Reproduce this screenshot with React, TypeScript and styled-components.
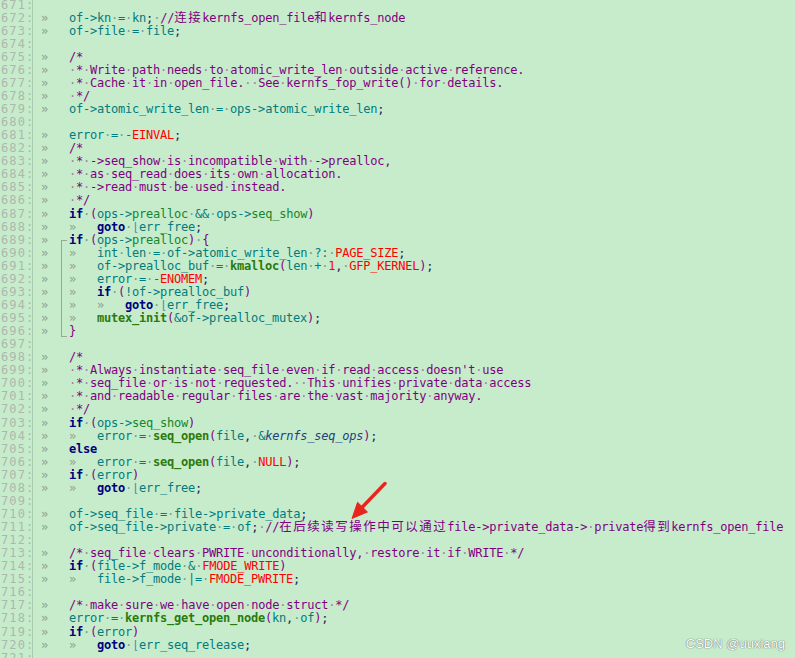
import React from "react";
import styled, { createGlobalStyle, css } from "styled-components";

const GlobalStyle = createGlobalStyle`
  html, body {
    margin: 0;
    padding: 0;
    background: #c7eccc;
    overflow: hidden;
  }
  body {
    width: 795px;
    height: 658px;
    position: relative;
  }
`;

const LINE_H = 13.07;

const Editor = styled.div`
  margin-top: -1.5px;
  display: flex;
  flex-direction: column;
  font-family: "DejaVu Sans Mono", "Liberation Mono", monospace;
  font-size: 12px;
  letter-spacing: -0.224px;
`;

const Row = styled.div`
  display: flex;
  height: ${LINE_H}px;
  line-height: ${LINE_H}px;
`;

const Gutter = styled.div`
  flex: 0 0 33px;
  box-sizing: border-box;
  padding-left: 1px;
  border-right: 1px solid #a9caac;
  color: #adb7ae;
  font-size: 12px;
  letter-spacing: 1.1px;
  white-space: pre;
  overflow: hidden;
`;

const Code = styled.div`
  flex: 1;
  padding-left: 8px;
  white-space: pre;
  overflow: visible;
`;

type Fold = "start" | "mid" | "end" | undefined;

const foldCss = {
  start: css`
    top: 6px;
    bottom: 0;
    border-top: 1px solid #97a898;
  `,
  mid: css`
    top: 0;
    bottom: 0;
  `,
  end: css`
    top: 0;
    height: 11px;
    border-bottom: 1px solid #97a898;
  `,
};

const Tab = styled.span<{ $fold?: Fold }>`
  display: inline-block;
  position: relative;
  width: 28px;
  color: #8d9f8f;
  vertical-align: top;
  ${(p) =>
    p.$fold &&
    css`
      &::after {
        content: "";
        position: absolute;
        left: 20px;
        width: 5px;
        border-left: 1px solid #97a898;
        ${foldCss[p.$fold]}
      }
    `}
`;

type Kind =
  | "var"
  | "field"
  | "fn"
  | "fnptr"
  | "kw"
  | "macro"
  | "num"
  | "paren"
  | "punct"
  | "op"
  | "mark"
  | "glob"
  | "comment";

const kindCss: Record<Kind, ReturnType<typeof css>> = {
  var: css`color: #007b7e;`,
  field: css`color: #007b7e;`,
  op: css`color: #007b7e;`,
  fn: css`color: #2a7a0c; font-weight: bold;`,
  fnptr: css`color: #15862a;`,
  kw: css`color: #000080; font-weight: bold;`,
  macro: css`color: #ff0000;`,
  num: css`color: #ff0000;`,
  paren: css`color: #800080;`,
  punct: css`color: #1c1c66;`,
  mark: css`color: #4f8fae;`,
  glob: css`color: #22407c; font-style: italic;`,
  comment: css`color: #800080;`,
};

const Tok = styled.span<{ $kind: Kind }>`
  ${(p) => kindCss[p.$kind]}
`;

const Ws = styled.span<{ $comment?: boolean }>`
  color: ${(p) => (p.$comment ? "#a77aa9" : "#6f9e95")};
`;

const Cjk = styled.span`
  font-family: "Noto Sans CJK SC", "Noto Sans", sans-serif;
  font-size: 12.5px;
  letter-spacing: 1.5px;
  line-height: 0;
  color: #800080;
`;

const Watermark = styled.div`
  position: absolute;
  right: 10px;
  bottom: 7px;
  font-family: "Liberation Sans", Arial, sans-serif;
  font-size: 13px;
  line-height: 15px;
  color: #ffffff;
  text-shadow: 0 0 1px #6a6a6a, 0 0 1px #6a6a6a;
  white-space: pre;
`;

const ArrowSvg = styled.svg`
  position: absolute;
  left: 345px;
  top: 478px;
  overflow: visible;
`;

const FIRST = 671;

const LINES: string[] = [
  "",
  "\tof->kn = kn; //连接kernfs_open_file和kernfs_node",
  "\tof->file = file;",
  "",
  "\t/*",
  "\t * Write path needs to atomic_write_len outside active reference.",
  "\t * Cache it in open_file.  See kernfs_fop_write() for details.",
  "\t */",
  "\tof->atomic_write_len = ops->atomic_write_len;",
  "",
  "\terror = -EINVAL;",
  "\t/*",
  "\t * ->seq_show is incompatible with ->prealloc,",
  "\t * as seq_read does its own allocation.",
  "\t * ->read must be used instead.",
  "\t */",
  "\tif (ops->prealloc && ops->seq_show)",
  "\t\tgoto ⌊err_free;",
  "\tif (ops->prealloc) {",
  "\t\tint len = of->atomic_write_len ?: PAGE_SIZE;",
  "\t\tof->prealloc_buf = kmalloc(len + 1, GFP_KERNEL);",
  "\t\terror = -ENOMEM;",
  "\t\tif (!of->prealloc_buf)",
  "\t\t\tgoto ⌊err_free;",
  "\t\tmutex_init(&of->prealloc_mutex);",
  "\t}",
  "",
  "\t/*",
  "\t * Always instantiate seq_file even if read access doesn't use",
  "\t * seq_file or is not requested.  This unifies private data access",
  "\t * and readable regular files are the vast majority anyway.",
  "\t */",
  "\tif (ops->seq_show)",
  "\t\terror = seq_open(file, &kernfs_seq_ops);",
  "\telse",
  "\t\terror = seq_open(file, NULL);",
  "\tif (error)",
  "\t\tgoto ⌊err_free;",
  "",
  "\tof->seq_file = file->private_data;",
  "\tof->seq_file->private = of; //在后续读写操作中可以通过file->private_data-> private得到kernfs_open_file",
  "",
  "\t/* seq_file clears PWRITE unconditionally, restore it if WRITE */",
  "\tif (file->f_mode & FMODE_WRITE)",
  "\t\tfile->f_mode |= FMODE_PWRITE;",
  "",
  "\t/* make sure we have open node struct */",
  "\terror = kernfs_get_open_node(kn, of);",
  "\tif (error)",
  "\t\tgoto ⌊err_seq_release;",
  "",
  "",
];

const FOLDS: Record<number, Fold> = {
  689: "start",
  690: "mid",
  691: "mid",
  692: "mid",
  693: "mid",
  694: "mid",
  695: "mid",
  696: "end",
};

const KEYWORDS = new Set(["if", "else", "goto", "return"]);

type T = { t: string; k: Kind | "ws" };

function tokenizeCode(src: string): T[] {
  const re = /( +)|([A-Za-z_]\w*)|(\d+)|(->)|(&&|\|=|\?:|[=+\-!&|])|([(){}])|([;,])|(⌊)|(.)/g;
  const raw: T[] = [];
  let m: RegExpExecArray | null;
  while ((m = re.exec(src))) {
    if (m[1]) raw.push({ t: m[1], k: "ws" });
    else if (m[2]) raw.push({ t: m[2], k: "var" });
    else if (m[3]) raw.push({ t: m[3], k: "num" });
    else if (m[4]) raw.push({ t: m[4], k: "op" });
    else if (m[5]) raw.push({ t: m[5], k: "op" });
    else if (m[6]) raw.push({ t: m[6], k: "paren" });
    else if (m[7]) raw.push({ t: m[7], k: "punct" });
    else if (m[8]) raw.push({ t: m[8], k: "mark" });
    else raw.push({ t: m[0], k: "punct" });
  }
  const sig = raw.map((x, i) => i).filter((i) => raw[i].k !== "ws");
  sig.forEach((idx, j) => {
    const tok = raw[idx];
    if (tok.k !== "var") return;
    const name = tok.t;
    const prev = j > 0 ? raw[sig[j - 1]] : undefined;
    const prev2 = j > 1 ? raw[sig[j - 2]] : undefined;
    const next = j < sig.length - 1 ? raw[sig[j + 1]] : undefined;
    if (KEYWORDS.has(name)) tok.k = "kw";
    else if (/^[A-Z][A-Z0-9_]*$/.test(name)) tok.k = "macro";
    else if (name === "kernfs_seq_ops") tok.k = "glob";
    else if (next && next.t === "(") tok.k = "fn";
    else if (prev && prev.t === "->" && prev2 && prev2.t === "ops" && name !== "atomic_write_len")
      tok.k = "fnptr";
    else if (prev && prev.t === "->") tok.k = "field";
  });
  return raw;
}

function renderWs(text: string, key: string, comment?: boolean) {
  return (
    <Ws key={key} $comment={comment}>
      {"·".repeat(text.length)}
    </Ws>
  );
}

function renderComment(src: string, keyBase: string) {
  const out: React.ReactNode[] = [];
  const re = /( +)|([\u3000-\u9fff\uff00-\uffef]+)|([^ \u3000-\u9fff\uff00-\uffef]+)/g;
  let m: RegExpExecArray | null;
  let i = 0;
  while ((m = re.exec(src))) {
    const key = `${keyBase}-c${i++}`;
    if (m[1]) out.push(renderWs(m[1], key, true));
    else if (m[2]) out.push(<Cjk key={key}>{m[2]}</Cjk>);
    else out.push(<Tok key={key} $kind="comment">{m[3]}</Tok>);
  }
  return out;
}

function renderLine(line: string, no: number) {
  const out: React.ReactNode[] = [];
  let rest = line;
  let tabIdx = 0;
  while (rest.startsWith("\t")) {
    out.push(
      <Tab key={`t${tabIdx}`} $fold={tabIdx === 0 ? FOLDS[no] : undefined}>
        »
      </Tab>
    );
    tabIdx++;
    rest = rest.slice(1);
  }
  const trimmed = rest.trimStart();
  if (trimmed.startsWith("/*") || trimmed.startsWith("*")) {
    out.push(...renderComment(rest, "cm"));
    return out;
  }
  const ci = rest.indexOf("//");
  const codePart = ci >= 0 ? rest.slice(0, ci) : rest;
  const commentPart = ci >= 0 ? rest.slice(ci) : "";
  tokenizeCode(codePart).forEach((tok, i) => {
    if (tok.k === "ws") out.push(renderWs(tok.t, `w${i}`));
    else
      out.push(
        <Tok key={`k${i}`} $kind={tok.k}>
          {tok.t}
        </Tok>
      );
  });
  if (commentPart) out.push(...renderComment(commentPart, "lc"));
  return out;
}

function Arrow() {
  return (
    <ArrowSvg width="45" height="46" viewBox="0 0 45 46">
      <line
        x1="40"
        y1="5.5"
        x2="16"
        y2="30.5"
        stroke="#e8251c"
        strokeWidth="3.4"
        strokeLinecap="round"
      />
      <polygon points="7,40.5 22.4,34 12.6,24.3" fill="#e8251c" stroke="#e8251c" strokeWidth="1" strokeLinejoin="round" />
    </ArrowSvg>
  );
}

export default function App() {
  return (
    <>
      <GlobalStyle />
      <Editor>
        {LINES.map((line, i) => {
          const no = FIRST + i;
          return (
            <Row key={no}>
              <Gutter>{`${no}:`}</Gutter>
              <Code>{renderLine(line, no)}</Code>
            </Row>
          );
        })}
      </Editor>
      <Arrow />
      <Watermark>CSDN @uuxiang</Watermark>
    </>
  );
}
